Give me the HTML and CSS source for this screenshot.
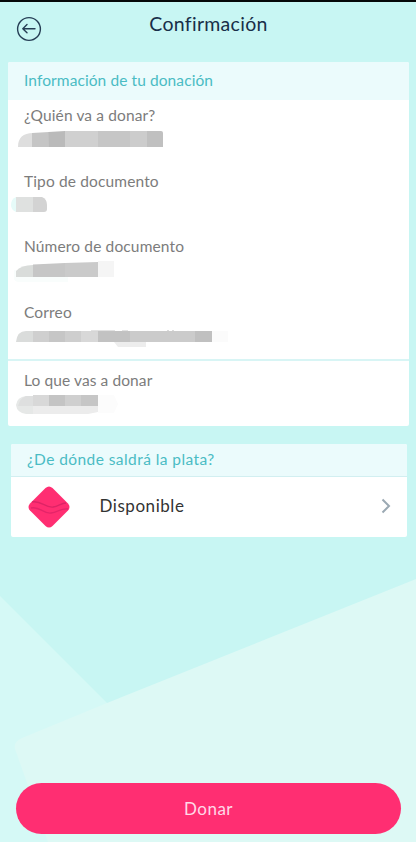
FILE: index.html
```
<!DOCTYPE html>
<html lang="es">
<head>
<meta charset="utf-8">
<meta name="viewport" content="width=device-width, initial-scale=1">
<title>Confirmación</title>
<link rel="stylesheet" href="styles.css">
</head>
<body>
<div class="screen">
  <svg class="backdrop" viewBox="0 0 416 842" aria-hidden="true">
    <path d="M0 596L107 703L140 842H0Z" fill="#d5f9f6"/>
    <path d="M416 579L107 703L22 738Q13 742 15 749L48 842H416Z" fill="#ddf9f5"/>
  </svg>
  <header class="topbar">
    <svg class="back" viewBox="0 0 26 26" fill="none" stroke="#263e55" stroke-width="1.4" stroke-linecap="round" stroke-linejoin="round"><circle cx="13" cy="13" r="11.4"/><path d="M19 12.7H6.8M11 8.6L6.8 12.7L11 16.8"/></svg>
    <h1 class="title">Confirmación</h1>
  </header>
  <main class="content">
    <section class="card">
      <h2 class="card-head"><span class="t-info">Información de tu donación</span></h2>
      <div class="field">
        <span class="label t-who">¿Quién va a donar?</span>
        <svg class="mask" viewBox="0 0 240 20"><path d="M10 17Q10 3 25 3V17Z" fill="#dedede"/><path d="M24 3L41 2V17H24Z" fill="#c5c5c5"/><path d="M40.500 2L57 1V17H41Z" fill="#bababa"/><path d="M57 1H90V17H57Z" fill="#d0d0d0"/><path d="M90 1H122V17H90Z" fill="#c6c6c6"/><path d="M122 1H139V17H122Z" fill="#cccccc"/><path d="M139 1H153Q155 1 155 3V17H139Z" fill="#c0c0c0"/></svg>
      </div>
      <div class="field">
        <span class="label t-type">Tipo de documento</span>
        <svg class="mask" viewBox="0 0 240 20"><path d="M8 1Q3 3 3 9Q3 14 8 16Z" fill="#e6fbf9"/><path d="M8 1H25V16H8Z" fill="#dfe1e0"/><path d="M25 1H34Q39 3 39 9V13Q39 16 36 16H25Z" fill="#d3d3d3"/></svg>
      </div>
      <div class="field">
        <span class="label t-num">Número de documento</span>
        <svg class="mask" viewBox="0 0 240 20"><path d="M6 9V18Q7 21 11 21H60V16Z" fill="#f9fdfc"/><path d="M8 16V10Q13 4 25 4V16Z" fill="#d9dcda"/><path d="M25 3.500L57 2V16H25Z" fill="#c6c6c6"/><path d="M57 2L90 1V16H57Z" fill="#cacaca"/><path d="M90 0H106V16H90Z" fill="#f5f5f5"/></svg>
      </div>
      <div class="field field-mail">
        <span class="label t-mail">Correo</span>
        <svg class="mask" viewBox="0 0 240 20"><path d="M8 15Q9 4 18 4H25V15Z" fill="#dadcdb"/><path d="M25 4H41V15H25Z" fill="#cfcfcf"/><path d="M41 4H57V15H41Z" fill="#c6c6c6"/><path d="M57 4H73V15H57Z" fill="#cecece"/><path d="M73 4H90V15H73Z" fill="#d8d8d8"/><path d="M90 4H122V15H90Z" fill="#c2c2c2"/><path d="M122 4H187V15H122Z" fill="#cbcbcb"/><path d="M187 4H204V15H187Z" fill="#c0c0c0"/><path d="M204 4H220V15H204Z" fill="#fbfbfb"/><path d="M106 15H138V20H110Z" fill="#ededed"/><path d="M83 3.700H107M114 3.700H120M159 3.500H161M164 3.500H166" stroke="#ccc" stroke-width=".7"/></svg>
      </div>
      <div class="field field-last">
        <span class="label t-what">Lo que vas a donar</span>
        <svg class="mask" viewBox="0 0 240 20"><path d="M8 11Q9 3 18 2H25V20H18Q9 19 8 11Z" fill="#e6e8e7"/><path d="M25 12H90V18L80 20H25Z" fill="#ececec"/><path d="M18 2H25V12H10Q12 4 18 2Z" fill="#dedfdf"/><path d="M25 1H41V12H25Z" fill="#d8d8d8"/><path d="M41 1H57V12H41Z" fill="#c4c4c4"/><path d="M57 1H73V12H57Z" fill="#cfcfcf"/><path d="M73 1H90V12H73Z" fill="#c6c6c6"/><path d="M90 1H106L110 10L106 19H90Z" fill="#fcfcfc"/></svg>
      </div>
    </section>
    <section class="card source">
      <h2 class="card-head source-head"><span class="t-source">¿De dónde saldrá la plata?</span></h2>
      <div class="account">
        <svg class="gem" viewBox="0 0 42 42"><path d="M17.500 2Q21 -1 24.500 2L40 17.500Q43 21 40 24.500L24.500 40Q21 43 17.500 40L2 24.500Q-1 21 2 17.500Z" fill="#ff2e72"/><path d="M4 16C13 14 17 22 25 21C31 20 33 17 38 17" fill="none" stroke="#dd2466" stroke-width="1.300"/><path d="M3 22C12 20 15 28 23 27C30 26 33 22 40 23" fill="none" stroke="#e52469" stroke-width="1.300"/></svg>
        <span class="account-name">Disponible</span>
        <svg class="chevron" viewBox="0 0 10 16" fill="none" stroke="#9ba9b3" stroke-width="2"><path d="M1.500 1.500L8 8L1.500 14.500"/></svg>
      </div>
    </section>
  </main>
  <button class="donate" type="button">Donar</button>
</div>
</body>
</html>
```
FILE: styles.css
```
* { box-sizing: border-box; }

body {
  margin: 0;
  font-family: Lato, "Open Sans", sans-serif;
}

.screen {
  position: relative;
  isolation: isolate;
  display: flex;
  flex-direction: column;
  width: 416px;
  height: 842px;
  padding-bottom: 8px;
  border-top: 2px solid #050909;
  background: #c8f6f3;
  overflow: hidden;
}

.backdrop {
  position: absolute;
  z-index: -1;
  top: -2px;
  left: 0;
  width: 416px;
  height: 842px;
}

.topbar {
  display: grid;
  grid-template-columns: 42px 1fr 41px;
  height: 60px;
  padding-top: 7px;
}

.back {
  width: 26px;
  height: 26px;
  margin: 7px 0 0 16px;
}

.title {
  margin: 0;
  text-align: center;
  font-size: 19.5px;
  line-height: 30px;
  font-weight: 400;
  letter-spacing: 0.3px;
  color: #182f49;
}

.content {
  display: flex;
  flex-direction: column;
  gap: 18px;
}

.card {
  margin: 0 7px 0 8px;
  border-radius: 2px;
  background: #fff;
  overflow: hidden;
}

.card-head {
  display: flex;
  align-items: center;
  height: 38px;
  margin: 0;
  padding: 0 16px 2px;
  background: #ebfbfc;
  font-size: 15.5px;
  line-height: 20px;
  font-weight: 400;
  color: #4abcc4;
}

.t-info { letter-spacing: 0.09px; }
.t-source { letter-spacing: 0.43px; }
.t-who { letter-spacing: 0.13px; }
.t-type { letter-spacing: 0.14px; }
.t-num { letter-spacing: 0.14px; }
.t-mail { letter-spacing: 0.15px; }
.t-what { letter-spacing: 0.1px; }

.field {
  display: flex;
  flex-direction: column;
  height: 65.7px;
  padding-top: 5px;
}

.label {
  padding-left: 16px;
  font-size: 15.5px;
  line-height: 20px;
  color: #7c7c7c;
  white-space: nowrap;
}

.mask {
  width: 240px;
  height: 20px;
  margin-top: 5px;
  overflow: visible;
}

.field-mail { height: 62px; }

.field-last {
  height: 67px;
  padding-top: 9px;
  border-top: 2px solid #d8f5f5;
}

.field-last .mask { margin-top: 4px; }

.source {
  margin: 0 9px 0 11px;
}

.source-head {
  height: 33px;
  padding-bottom: 3px;
  border-bottom: 1px solid #d2eff1;
}

.account {
  display: flex;
  align-items: center;
  height: 60px;
  padding: 0 16px 0 17px;
}

.gem {
  width: 42px;
  height: 42px;
}

.account-name {
  flex: 1;
  margin-left: 29.5px;
  padding-bottom: 3px;
  font-size: 17px;
  color: #333;
  letter-spacing: 0.55px;
}

.chevron {
  width: 10px;
  height: 16px;
  margin-bottom: 2px;
}

.donate {
  height: 51px;
  margin: auto 15px 0 16px;
  border: 0;
  border-radius: 26px;
  background: #ff2e72;
  color: #ffd9e8;
  font-family: inherit;
  font-size: 17px;
  letter-spacing: 0.5px;
}
```
